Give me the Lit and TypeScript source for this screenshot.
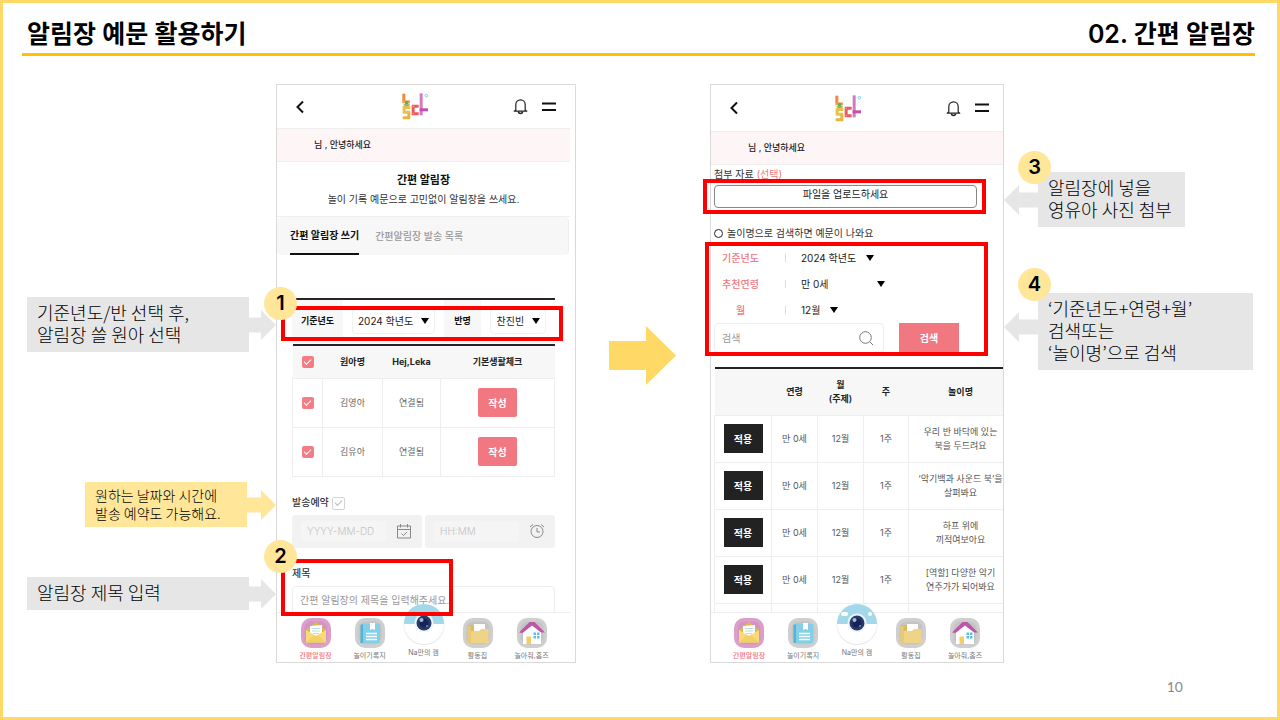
import { LitElement, html, css, svg, nothing, type TemplateResult } from "lit";
import { customElement, property, state } from "lit/decorators.js";
import { classMap } from "lit/directives/class-map.js";

interface Play {
  age: string;
  month: string;
  week: string;
  name: string[];
}

const PLAYS: Play[] = [
  { age: "만 0세", month: "12월", week: "1주", name: ["우리 반 바닥에 있는", "북을 두드려요"] },
  { age: "만 0세", month: "12월", week: "1주", name: ["‘악기백과 사운드 북’을", "살펴봐요"] },
  { age: "만 0세", month: "12월", week: "1주", name: ["하프 위에", "끼적여보아요"] },
  { age: "만 0세", month: "12월", week: "1주", name: ["[역할] 다양한 악기", "연주가가 되어봐요"] },
];

const CHILDREN = ["김영아", "김유아"];

const caret = html`<svg class="caret" viewBox="0 0 8 6" aria-hidden="true"><path d="M0 0h8L4 6z" /></svg>`;

/* ---------- Callout with an arrow ---------- */
@customElement("slide-note")
export class SlideNote extends LitElement {
  @property() side: "left" | "right" = "right";
  @property() tone: "grey" | "yellow" = "grey";
  @property({ type: Array }) lines: string[] = [];
  @property() badge = "";

  static styles = css`
    :host { display: block; }
    .note { display: flex; align-items: center; color: #000; }
    .note.left { flex-direction: row-reverse; }
    .box {
      position: relative; flex: 1; background: #e6e6e6; padding: 4px 10px 7px;
      font-size: 18px; line-height: 22px; font-weight: 300; white-space: nowrap;
    }
    .yellow .box { background: #ffe699; font-size: 14px; line-height: 18px; padding: 4px 10px 5px; }
    .box p { margin: 0; }
    svg { display: block; flex: none; width: 27px; height: 30px; fill: #e6e6e6; }
    .yellow svg { width: 29px; fill: #ffe699; }
    .left svg { width: 34px; transform: scaleX(-1); }
    .tall svg { margin-bottom: 10px; }
    .badge {
      position: absolute; left: -20px; top: -21px; width: 33px; height: 33px; border-radius: 50%;
      background: #ffe699; color: #000; font: 600 20px/33px Inter, sans-serif; text-align: center;
    }
    .tall .badge { top: -25px; }
  `;

  render() {
    const shaft = this.side === "left" ? 34 : this.tone === "yellow" ? 29 : 27;
    return html`
      <div class=${classMap({ note: true, left: this.side === "left", yellow: this.tone === "yellow", tall: this.lines.length > 2 })}>
        <div class="box">
          ${this.lines.map((l) => html`<p>${l}</p>`)}
          ${this.badge ? html`<span class="badge">${this.badge}</span>` : nothing}
        </div>
        <svg viewBox="0 0 ${shaft} 30" aria-hidden="true">
          <path d="M0 7.5H${shaft - 15}V0L${shaft} 15 ${shaft - 15} 30V22.5H0z" />
        </svg>
      </div>
    `;
  }
}

/* ---------- Mobile app frame ---------- */
@customElement("app-phone")
export class AppPhone extends LitElement {
  static styles = css`
    :host { display: flex; flex-direction: column; position: relative; min-height: 0; border: 1px solid #d9d9d9; background: #fff; box-sizing: border-box; }
    button { font: inherit; border: 0; padding: 0; background: none; color: inherit; }
    svg { display: block; }
    .bar { display: grid; grid-template-columns: 5fr auto 6fr; align-items: center; height: var(--bar-height, 43px); margin-right: var(--gutter, 0); padding: 0 13px 0 18px; border-bottom: 1px solid #eee; flex: none; box-sizing: content-box; }
    .bar > button { justify-self: start; }
    .tools { display: flex; justify-content: flex-end; align-items: center; gap: 14px; }
    .hello { margin: 0 var(--gutter, 0) 0 0; padding-left: 37px; background: #fef6f6; border-bottom: 1px solid #eee; font-size: 9px; line-height: 32px; color: #222; font-weight: 500; flex: none; }
    .screen { flex: 1; min-height: 0; overflow: hidden; }
    nav { position: relative; display: grid; grid-template-columns: repeat(5, 54px); justify-content: center; flex: none; height: 49px; margin-right: var(--gutter, 0); border-top: 1px solid #eee; box-sizing: content-box; background: #fff; }
    nav a { display: flex; flex-direction: column; align-items: center; padding-top: 5px; font-size: 7px; line-height: 12px; color: #777; text-decoration: none; white-space: nowrap; }
    nav a svg { width: 30px; height: 30px; margin-bottom: 2px; }
    nav a.on { color: #f0707c; font-weight: 500; }
    nav a.camera { padding: 0; margin-top: -10px; }
    nav a.camera svg { width: 42px; height: 42px; }
  `;

  private logo() {
    return html`<svg width="27" height="27" viewBox="0 0 81 81" role="img" aria-label="놀다">
      <path d="M1 2h9v22H1z" fill="#f08a3c" />
      <path d="M1 22h23v9H1z" fill="#f3a052" />
      <path d="M9 24h10v16H9z" fill="#5cae74" />
      <path d="M5 33h18v5H5z" fill="#8dbb6b" />
      <path d="M2 39h23v9H2zM2 46h9v12H2zM2 53h23v9H2z" fill="#ecc04c" />
      <path d="M16 60h9v12h-9zM2 70h23v9H2z" fill="#e7b641" />
      <path d="M29 35h21v9H38v14h12v9H29z" fill="#ea5a5e" />
      <path d="M32 38h4v4h-4zM32 60h4v4h-4z" fill="#f49a9a" />
      <path d="M53 1h9v66h-9z" fill="#d47abf" />
      <path d="M53 46h25v9H53z" fill="#c04fae" />
      <circle cx="73" cy="8" r="4" fill="none" stroke="#7ccdf0" stroke-width="3" />
    </svg>`;
  }

  private tile(fill: string, shape: unknown) {
    return html`<svg viewBox="0 0 30 30" aria-hidden="true">
      <rect width="30" height="30" rx="10" fill=${fill} />
      <rect x="3.500" y="3.500" width="23" height="23" rx="7" fill="#000" opacity=".05" />
      ${shape}
    </svg>`;
  }

  private items(): { label: string; kind: string; icon: TemplateResult }[] {
    return [
      {
        label: "간편알림장", kind: "on",
        icon: this.tile("#dc9fcb", svg`
          <path d="M5 12 15 4l10 8v12H5z" fill="#e3b83f" />
          <path d="M9 8 21 7V18H9z" fill="#fff" />
          <path d="M11 10.500h8M11 13h8M12 15.500h6" stroke="#b9dbe0" />
          <path d="M5 12l10 6 10-6v12.500H5z" fill="#f7db78" />
          <path d="M5 24.500 13 17l2 1 2-1 8 7.500z" fill="#f2d063" />`),
      },
      {
        label: "놀이기록지", kind: "",
        icon: this.tile("#cfcfcf", svg`
          <path d="M5.500 7l3-1v19h-3z" fill="#4fb4d6" />
          <path d="M8 6h17v19H8z" fill="#84cfe8" />
          <path d="M15 5h5v7l-2.500-1L15 12z" fill="#fff" />
          <path d="M11 15.500h11M11 18.500h11M11 21.500h11" stroke="#fff" stroke-width="1.400" />`),
      },
      {
        label: "Na만의 캠", kind: "camera",
        icon: html`<svg viewBox="0 0 42 42" aria-hidden="true">
          <circle cx="21" cy="21.500" r="20.500" fill="#e6e6e6" />
          <circle cx="21" cy="21" r="20" fill="#fff" />
          <path d="M1 21a20 20 0 0 1 40 0z" fill="#a3d8ea" />
          <rect x="5" y="9" width="7" height="4" rx="2" fill="#fff" />
          <circle cx="34" cy="11" r="2" fill="#fff" />
          <circle cx="21" cy="20" r="9.500" fill="#eef4f8" />
          <circle cx="21" cy="20" r="7.500" fill="#26396f" />
          <circle cx="21" cy="20" r="4.500" fill="#16244f" />
          <circle cx="18.500" cy="17" r="2" fill="#a9b9dc" />
          <circle cx="24" cy="23" r="1" fill="#7488bb" />
        </svg>`,
      },
      {
        label: "활동집", kind: "",
        icon: this.tile("#cfcfcf", svg`
          <path d="M4.500 7H11l2 2.500h9V24H4.500z" fill="#ddbb5c" />
          <path d="M11 6h11v8H11z" fill="#fff" />
          <path d="M7.500 13H16l2-2h7.500v14h-18z" fill="#efd487" />
          <path d="M4.500 8h3v17h-3z" fill="#e9cb77" />`),
      },
      {
        label: "놀아줘,홈즈", kind: "",
        icon: this.tile("#cfcfcf", svg`
          <path d="M6 14l9-8 9 8v12H6z" fill="#fff" />
          <path d="M2 14.500 12.500 4h5L28 14.500h-4L15 7.500 5.500 15z" fill="#bf55a6" />
          <path d="M9.500 18.500h4.500V26H9.500z" fill="#f2cf60" />
          <path d="M16.500 14.500h2.500V17h-2.500zM20 14.500h2.500V17H20zM16.500 18h2.500v2.500h-2.500zM20 18h2.500v2.500H20z" fill="#5fbfe4" />`),
      },
    ];
  }

  render() {
    return html`
      <header class="bar">
        <button aria-label="뒤로">
          <svg width="10" height="14" viewBox="0 0 10 14"><path d="M8 1.500 2.500 7 8 12.500" fill="none" stroke="#111" stroke-width="2" /></svg>
        </button>
        ${this.logo()}
        <div class="tools">
          <button aria-label="알림">
            <svg width="15" height="17" viewBox="0 0 15 17" fill="none" stroke="#222" stroke-width="1.200" stroke-linejoin="round">
              <path d="M2.800 12V6.500a4.700 4.700 0 0 1 9.400 0V12l1.600 1.200H1.200z" />
              <path d="M5.500 13.500a2 2 0 0 0 4 0" stroke-width="1.600" />
            </svg>
          </button>
          <button aria-label="메뉴">
            <svg width="15" height="10" viewBox="0 0 15 10"><path d="M0 1.500h14M0 8h14" stroke="#111" stroke-width="1.800" /></svg>
          </button>
        </div>
      </header>
      <p class="hello">님 , 안녕하세요</p>
      <div class="screen"><slot></slot></div>
      <nav>
        ${this.items().map((i) => html`<a class=${i.kind} href="#">${i.icon}${i.label}</a>`)}
      </nav>
      <slot name="marks"></slot>
    `;
  }
}

/* ---------- Slide ---------- */
@customElement("app-root")
export class AppRoot extends LitElement {
  @state() private picked = new Set<string>(CHILDREN);

  static styles = css`
    :host {
      display: flex; flex-direction: column; height: 100vh; box-sizing: border-box;
      border: 3px solid #ffd966; background: #fff; color: #111;
      font-family: Inter, "Noto Sans CJK KR", sans-serif; line-height: 16px;
    }
    *, *::before { box-sizing: border-box; }
    button, input, select { font: inherit; color: inherit; border: 0; padding: 0; margin: 0; background: none; border-radius: 0; min-width: 0; }
    h1, h2, h3, p { margin: 0; font-weight: inherit; font-size: inherit; }

    .top { display: flex; justify-content: space-between; margin: 0 22px 0 19px; padding: 0 0 0 5px; height: 53px; border-bottom: 3px solid #ffc000; color: #000; font-size: 25px; line-height: 62px; white-space: nowrap; flex: none; }
    .top h1, .top h2 { font-weight: 600; }

    main { flex: 1; min-height: 0; display: grid; grid-template-columns: minmax(0, 1fr) 300px 134px 294px minmax(0, 1fr); grid-template-rows: minmax(0, 1fr); padding-top: 28px; }
    .notes { display: flex; flex-direction: column; font-family: "Noto Sans CJK KR", sans-serif; }
    .before { padding: 213px 0 0 24px; }
    .before .timing { margin: 130px 0 50px 58px; }
    .after { padding: 88px 24px 0 0; gap: 66px; align-items: flex-start; }
    .after .short { width: 181px; }
    .after .long { align-self: stretch; }
    .next { padding: 242px 0 0 33px; }
    .next svg { display: block; width: 67px; height: 59px; fill: #ffd966; }

    .list { --gutter: 5px; }
    .find { --bar-height: 46px; }
    .mark { position: absolute; border: 4px solid #f00; pointer-events: none; }
    .mark b { position: absolute; left: -21px; top: -23px; width: 33px; height: 33px; border-radius: 50%; background: #ffe699; color: #000; font-weight: 600; font-size: 20px; line-height: 33px; text-align: center; }
    .mark-class { left: 4px; top: 221px; width: 282px; height: 35px; }
    .mark-title { left: 4px; top: 474px; width: 172px; height: 57px; }
    .mark-file { left: -8px; top: 94px; width: 283px; height: 35px; }
    .mark-search { left: -6px; top: 157px; width: 283px; height: 114px; }

    .intro { margin-right: 5px; height: 55px; padding-top: 9px; border-bottom: 1px solid #eee; text-align: center; font-size: 10px; line-height: 18px; color: #333; }
    .intro h3 { font-size: 11px; font-weight: 700; color: #111; line-height: 19px; }
    .tabs { display: flex; gap: 16px; margin-right: 6px; height: 38px; padding: 0 13px; background: #f7f7f7; border-radius: 5px; border-right: 1px solid #eee; }
    .tabs button { font-size: 10px; line-height: 35px; height: 38px; color: #999; font-weight: 500; }
    .tabs .on { color: #111; font-weight: 700; border-bottom: 2px solid #111; }
    .form { padding: 43px 20px 0 15px; font-size: 9px; }

    .pick { display: grid; grid-template-columns: 51px 101px 37px 1fr; height: 46px; border-top: 2px solid #2b2226; }
    .pick label { display: flex; align-items: center; justify-content: center; background: #f7f7f7; font-weight: 700; margin-bottom: 3px; }
    .drop { display: flex; align-items: center; color: #222; font-size: 10px; }
    .drop select { appearance: none; }
    .caret { display: block; width: 8px; height: 6px; flex: none; fill: #000; }
    .pick .drop { justify-content: center; gap: 7px; height: 26px; margin: 8px 9px 0; border: 1px solid #f1f1f1; border-radius: 4px; }

    table { border-collapse: collapse; table-layout: fixed; }
    th, td { padding: 0; text-align: center; vertical-align: middle; }
    .kids { width: 263px; border-top: 2px solid #2b2226; color: #666; }
    .kids th { height: 33px; background: #f7f7f7; color: #222; font-weight: 700; }
    .kids td { height: 49px; border: 1px solid #eee; }
    .kids input, .book input { appearance: none; display: block; width: 12px; height: 12px; margin: 0 auto; border-radius: 2px; background: #f47c84; }
    .kids input:checked::before, .book input::before { content: ""; display: block; width: 7px; height: 4px; margin: 3px auto 0; border: solid #fff; border-width: 0 0 1px 1px; transform: rotate(-45deg); }
    .write { width: 39px; height: 29px; background: #f17781; color: #fff; font-size: 10px; font-weight: 600; border-radius: 2px; }

    .book { display: flex; align-items: center; gap: 3px; margin-top: 16px; font-size: 10px; line-height: 18px; color: #333; font-weight: 500; }
    .book input { margin: 3px 0 0; width: 13px; height: 13px; background: #fff; border: 1px solid #d4d4d4; }
    .book input::before { border-color: #bbb; margin-top: 2px; }
    .when { display: grid; grid-template-columns: minmax(0, 1fr) minmax(0, 1fr); gap: 3px; margin-top: 4px; }
    .when label { display: flex; align-items: center; gap: 10px; height: 33px; padding: 0 10px 0 9px; background: #f2f2f2; border-radius: 3px; }
    .when input { flex: 1; height: 21px; padding: 0 6px; border-radius: 3px; background: #f5f5f5; font-size: 10px; font-weight: 300; }
    .when svg { flex: none; width: 16px; height: 16px; fill: none; stroke: #888; }
    input::placeholder { color: #c4c4c4; opacity: 1; }
    .title { display: block; margin-top: 16px; font-size: 10px; line-height: 18px; color: #333; font-weight: 500; }
    .title-box { display: block; width: 100%; height: 28px; margin-top: 4px; padding: 0 7px; border: 1px solid #eee; border-radius: 4px; font-size: 10px; }
    .title-box::placeholder { color: #999; }

    .search { padding: 0 0 0 3px; }
    .attach { font-size: 10px; line-height: 18px; color: #333; padding-bottom: 2px; }
    .attach span { color: #f17781; }
    .upload { display: block; width: 263px; height: 23px; padding-bottom: 5px; border: 1px solid #888; border-radius: 4px; font-size: 10px; line-height: 16px; color: #222; background: #fff; }
    .hint { display: flex; align-items: center; gap: 4px; margin-top: 15px; font-size: 10px; line-height: 20px; color: #333; }
    .hint input { appearance: none; width: 9px; height: 9px; border: 1px solid #222; border-radius: 50%; }
    .row { display: grid; grid-template-columns: 53px 15px 1fr; align-items: center; height: 26px; font-size: 10px; }
    .rows { padding: 2px 0 0; }
    .row label { color: #f17781; text-align: center; font-weight: 500; }
    .row .drop { color: #222; border-left: 1px solid #ddd; margin-left: 3px; height: 8px; padding-left: 15px; gap: 9px; grid-column: 3; }
    .row .wide { gap: 48px; }
    .query { display: flex; gap: 15px; }
    .query label { display: flex; align-items: center; width: 170px; height: 30px; padding: 0 9px 0 7px; border: 1px solid #eee; border-radius: 4px; }
    .query input { flex: 1; font-size: 10px; }
    .query input::placeholder { color: #999; }
    .query svg { flex: none; width: 16px; height: 16px; fill: none; stroke: #777; }
    .query button { width: 60px; height: 30px; background: #f17781; color: #fff; font-size: 10px; font-weight: 600; }

    .plays { width: 299px; margin-top: 14px; border-top: 2px solid #222; font-size: 9px; line-height: 14px; color: #555; }
    .plays th { height: 47px; background: #f7f7f7; color: #222; font-weight: 600; }
    .plays td { height: 47px; border: 1px solid #eee; white-space: nowrap; }
    .apply { width: 39px; height: 29px; background: #222; color: #fff; font-size: 10px; font-weight: 600; }

    footer { flex: none; height: 54px; padding: 14px 94px 0 0; text-align: right; color: #888; font: 14px/20px Lato, sans-serif; }
  `;

  private toggle(name: string) {
    const next = new Set(this.picked);
    next.has(name) ? next.delete(name) : next.add(name);
    this.picked = next;
  }

  private toggleAll() {
    this.picked = new Set(this.picked.size === CHILDREN.length ? [] : CHILDREN);
  }

  private listPhone() {
    return html`
      <app-phone class="list">
        <div class="intro">
          <h3>간편 알림장</h3>
          <p>놀이 기록 예문으로 고민없이 알림장을 쓰세요.</p>
        </div>
        <div class="tabs">
          <button class="on">간편 알림장 쓰기</button>
          <button>간편알림장 발송 목록</button>
        </div>
        <div class="form">
          <div class="pick">
            <label for="year">기준년도</label>
            <div class="drop"><select id="year"><option>2024 학년도</option></select>${caret}</div>
            <label for="class">반명</label>
            <div class="drop"><select id="class"><option>찬진빈</option></select>${caret}</div>
          </div>
          <table class="kids">
            <colgroup><col style="width:30px" /><col style="width:60px" /><col style="width:58px" /><col /></colgroup>
            <thead>
              <tr>
                <th><input type="checkbox" aria-label="전체" .checked=${this.picked.size === CHILDREN.length} @change=${this.toggleAll} /></th>
                <th>원아명</th><th>Hej,Leka</th><th>기본생활체크</th>
              </tr>
            </thead>
            <tbody>
              ${CHILDREN.map((name) => html`
                <tr>
                  <td><input type="checkbox" aria-label=${name} .checked=${this.picked.has(name)} @change=${() => this.toggle(name)} /></td>
                  <td>${name}</td><td>연결됨</td><td><button class="write">작성</button></td>
                </tr>`)}
            </tbody>
          </table>
          <label class="book">발송예약<input type="checkbox" /></label>
          <div class="when">
            <label>
              <input type="text" aria-label="날짜" placeholder="YYYY-MM-DD" />
              <svg viewBox="0 0 16 16" aria-hidden="true"><path d="M1.500 3h13v12h-13zM1.500 6.500h13M4.500 1v3.500M11.500 1v3.500M5.500 10.500l2 2 3.500-3.500" /></svg>
            </label>
            <label>
              <input type="text" aria-label="시간" placeholder="HH:MM" />
              <svg viewBox="0 0 16 16" aria-hidden="true"><circle cx="8" cy="8.500" r="6" /><path d="M8 5v4h3M1 4l3-2.500M15 4l-3-2.500" /></svg>
            </label>
          </div>
          <label class="title" for="title">제목</label>
          <input class="title-box" id="title" type="text" placeholder="간편 알림장의 제목을 입력해주세요." />
        </div>
        <div slot="marks" class="mark mark-class"><b>1</b></div>
        <div slot="marks" class="mark mark-title"><b>2</b></div>
      </app-phone>
    `;
  }

  private findPhone() {
    return html`
      <app-phone class="find">
        <div class="search">
          <p class="attach">첨부 자료 <span>(선택)</span></p>
          <button class="upload">파일을 업로드하세요</button>
          <label class="hint"><input type="radio" />놀이명으로 검색하면 예문이 나와요</label>
          <div class="rows">
            <div class="row"><label for="y">기준년도</label><div class="drop"><select id="y"><option>2024 학년도</option></select>${caret}</div></div>
            <div class="row"><label for="a">추천연령</label><div class="drop wide"><select id="a"><option>만 0세</option></select>${caret}</div></div>
            <div class="row"><label for="m">월</label><div class="drop"><select id="m"><option>12월</option></select>${caret}</div></div>
          </div>
          <div class="query">
            <label>
              <input type="text" aria-label="검색" placeholder="검색" />
              <svg viewBox="0 0 16 16" aria-hidden="true"><circle cx="7.500" cy="7.500" r="5.800" /><path d="M11.500 11.500 15 15" /></svg>
            </label>
            <button>검색</button>
          </div>
          <table class="plays">
            <colgroup><col style="width:57px" /><col style="width:46px" /><col style="width:46px" /><col style="width:45px" /><col /></colgroup>
            <thead><tr><th></th><th>연령</th><th>월<br />(주제)</th><th>주</th><th>놀이명</th></tr></thead>
            <tbody>
              ${PLAYS.map((p) => html`
                <tr>
                  <td><button class="apply">적용</button></td>
                  <td>${p.age}</td><td>${p.month}</td><td>${p.week}</td>
                  <td>${p.name[0]}<br />${p.name[1]}</td>
                </tr>`)}
              <tr><td></td><td></td><td></td><td></td><td></td></tr>
            </tbody>
          </table>
        </div>
        <div slot="marks" class="mark mark-file"></div>
        <div slot="marks" class="mark mark-search"></div>
      </app-phone>
    `;
  }

  render() {
    return html`
      <header class="top"><h1>알림장 예문 활용하기</h1><h2>02. 간편 알림장</h2></header>
      <main>
        <aside class="notes before">
          <slide-note .lines=${["기준년도/반 선택 후,", "알림장 쓸 원아 선택"]}></slide-note>
          <slide-note class="timing" tone="yellow" .lines=${["원하는 날짜와 시간에", "발송 예약도 가능해요."]}></slide-note>
          <slide-note .lines=${["알림장 제목 입력"]}></slide-note>
        </aside>
        ${this.listPhone()}
        <div class="next"><svg viewBox="0 0 67 59" aria-hidden="true"><path d="M0 15h37V0l30 29.500L37 59V44H0z" /></svg></div>
        ${this.findPhone()}
        <aside class="notes after">
          <slide-note class="short" side="left" badge="3" .lines=${["알림장에 넣을", "영유아 사진 첨부"]}></slide-note>
          <slide-note class="long" side="left" badge="4" .lines=${["‘기준년도+연령+월’", "검색또는", "‘놀이명’으로 검색"]}></slide-note>
        </aside>
      </main>
      <footer>10</footer>
    `;
  }
}
